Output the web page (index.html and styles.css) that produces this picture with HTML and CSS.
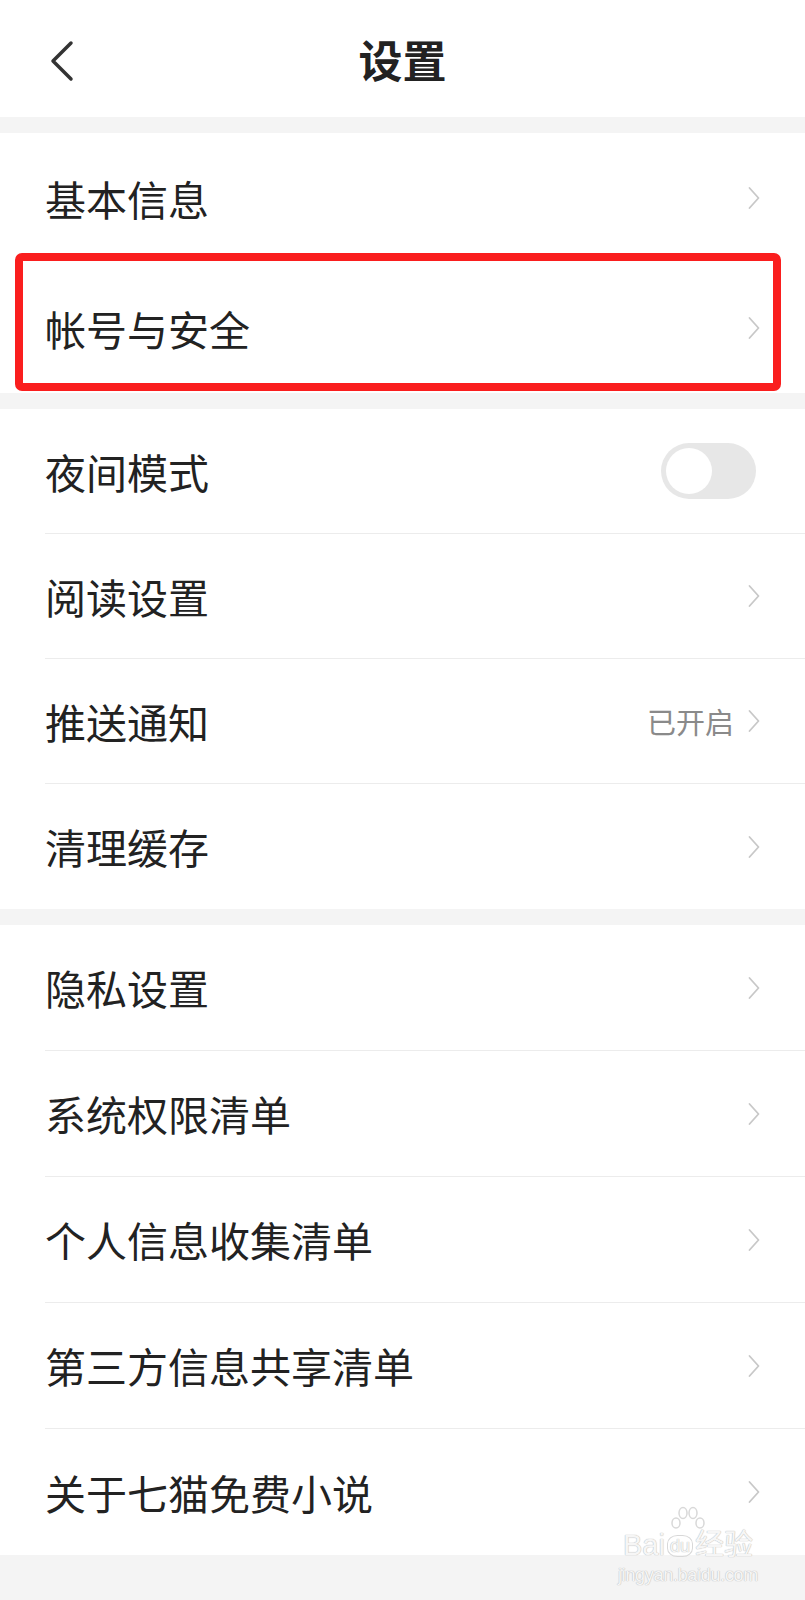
FILE: index.html
```html
<!DOCTYPE html>
<html lang="zh-CN">
<head>
  <meta charset="UTF-8" />
  <meta name="viewport" content="width=device-width, initial-scale=1.0"/>
  <title>设置</title>
  <link rel="stylesheet" href="styles.css">
</head>
<body>
  <header class="topbar">
    <svg class="back" width="26" height="42" viewBox="0 0 26 42">
      <polyline points="22,3 4,21 22,39" fill="none" stroke="#333" stroke-width="3.5" stroke-linecap="round" stroke-linejoin="round"/>
    </svg>
    <h1>设置</h1>
  </header>

  <section class="group first">
    <div class="row"><span class="label">基本信息</span><span class="arrow"></span></div>
    <div class="row marked"><span class="label">帐号与安全</span><span class="arrow"></span><div class="mark"></div></div>
  </section>

  <section class="group">
    <div class="row"><span class="label">夜间模式</span><span class="toggle"><span class="knob"></span></span></div>
    <div class="row"><span class="label">阅读设置</span><span class="arrow"></span></div>
    <div class="row"><span class="label">推送通知</span><span class="value">已开启</span><span class="arrow"></span></div>
    <div class="row"><span class="label">清理缓存</span><span class="arrow"></span></div>
  </section>

  <section class="group last">
    <div class="row"><span class="label">隐私设置</span><span class="arrow"></span></div>
    <div class="row"><span class="label">系统权限清单</span><span class="arrow"></span></div>
    <div class="row"><span class="label">个人信息收集清单</span><span class="arrow"></span></div>
    <div class="row"><span class="label">第三方信息共享清单</span><span class="arrow"></span></div>
    <div class="row"><span class="label">关于七猫免费小说</span><span class="arrow"></span></div>
  </section>

  <!-- baidu jingyan watermark -->
  <div class="watermark">
    <svg class="paw" width="36" height="26" viewBox="0 0 36 26">
      <g fill="none" stroke="#d8d8d8" stroke-width="1.5">
        <ellipse cx="6" cy="17" rx="4" ry="5"/>
        <ellipse cx="13" cy="7" rx="4" ry="5.5"/>
        <ellipse cx="23" cy="7" rx="4" ry="5.5"/>
        <ellipse cx="30" cy="17" rx="4" ry="5"/>
      </g>
    </svg>
    <div class="wm-top">Bai<span class="wm-du">du</span>经验</div>
    <div class="wm-url">jingyan.baidu.com</div>
  </div>
</body>
</html>
```

FILE: styles.css
```css
body {
  margin: 0;
  font-family: "Noto Sans CJK SC", "Noto Sans", sans-serif;
  background-color: #f4f4f4;
  color: #222;
  position: relative;
  min-height: 1600px;
}
.topbar {
  height: 117px;
  background-color: #fff;
  display: flex;
  align-items: center;
  justify-content: center;
  position: relative;
}
.topbar h1 {
  margin: 0;
  font-size: 44px;
  font-weight: 700;
  color: #222;
}
.back {
  position: absolute;
  left: 49px;
  top: 40px;
}
.group {
  background-color: #fff;
  margin-top: 16px;
}
.row {
  height: 125px;
  margin-left: 45px;
  padding-right: 45px;
  display: flex;
  align-items: center;
  border-bottom: 1px solid #ececec;
  position: relative;
  box-sizing: border-box;
}
.group .row:last-child { border-bottom: none; }
.group.first .row {
  height: 130px;
  border-bottom: none;
}
.group.last .row { height: 126px; }
.label {
  flex: 1;
  font-size: 41px;
  line-height: 1;
}
.value {
  font-size: 29px;
  color: #8a8a8a;
  margin-right: 14px;
}
.arrow {
  width: 12px;
  height: 24px;
  background: no-repeat center;
  background-image: url("data:image/svg+xml,%3Csvg xmlns='http://www.w3.org/2000/svg' width='12' height='24' viewBox='0 0 12 24'%3E%3Cpolyline points='1.5,2 10.5,12 1.5,22' fill='none' stroke='%23c8c8c8' stroke-width='1.8' stroke-linecap='round' stroke-linejoin='round'/%3E%3C/svg%3E");
}
.toggle {
  width: 95px;
  height: 56px;
  border-radius: 28px;
  background-color: #e7e7e7;
  margin-right: 4px;
  display: flex;
  align-items: center;
  padding-left: 5px;
  box-sizing: border-box;
}
.knob {
  width: 46px;
  height: 46px;
  border-radius: 50%;
  background-color: #fff;
}
.mark {
  position: absolute;
  left: -30px;
  right: 24px;
  top: -10px;
  bottom: 2px;
  border: 8px solid #fa1e1e;
  border-radius: 7px;
}
.watermark {
  position: absolute;
  left: 612px;
  top: 1506px;
  width: 152px;
  white-space: nowrap;
  color: #f6f6f6;
  text-shadow: 0 0 1px #bdbdbd, 0 0 1px #bdbdbd;
  font-family: "Liberation Sans", "Noto Sans CJK SC", sans-serif;
  text-align: center;
}
.paw {
  display: block;
  margin: 0 auto -4px 58px;
}
.wm-top {
  font-size: 29px;
  line-height: 34px;
}
.wm-du {
  font-size: 18px;
  border: 1.5px solid #d8d8d8;
  border-radius: 40%;
  padding: 0 2px;
  margin: 0 2px;
  vertical-align: 3px;
}
.wm-url {
  font-size: 18px;
  line-height: 24px;
  letter-spacing: -0.3px;
}
```
